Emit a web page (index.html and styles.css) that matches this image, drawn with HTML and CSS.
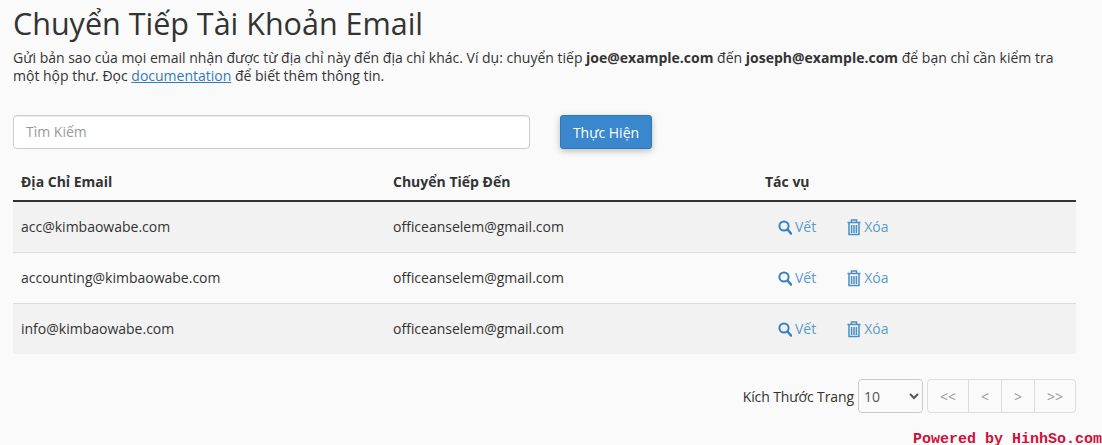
FILE: index.html
```html
<!DOCTYPE html>
<html lang="vi">
<head>
  <meta charset="UTF-8">
  <meta name="viewport" content="width=device-width, initial-scale=1.0">
  <title>Chuyển Tiếp Tài Khoản Email</title>
  <link rel="stylesheet" href="styles.css">
</head>
<body>
  <div class="page">
    <h1>Chuyển Tiếp Tài Khoản Email</h1>
    <p class="intro">Gửi bản sao của mọi email nhận được từ địa chỉ này đến địa chỉ khác. Ví dụ: chuyển tiếp <strong>joe@example.com</strong> đến <strong>joseph@example.com</strong> để bạn chỉ cần kiểm tra một hộp thư. Đọc <a href="#">documentation</a> để biết thêm thông tin.</p>

    <div class="search-row">
      <input class="search-input" type="text" placeholder="Tìm Kiếm">
      <button class="go-button">Thực Hiện</button>
    </div>

    <table class="forwarders">
      <thead>
        <tr>
          <th class="col-email">Địa Chỉ Email</th>
          <th class="col-dest">Chuyển Tiếp Đến</th>
          <th>Tác vụ</th>
        </tr>
      </thead>
      <tbody>
        <tr>
          <td>acc@kimbaowabe.com</td>
          <td>officeanselem@gmail.com</td>
          <td>
            <div class="actions">
              <a href="#"><svg class="icon" viewBox="0 0 14 15"><circle cx="6" cy="6" r="4.6" fill="none" stroke="currentColor" stroke-width="2"/><path d="M9.5 9.5l3.5 4" stroke="currentColor" stroke-width="2.6" stroke-linecap="round"/></svg>Vết</a>
              <a href="#"><svg class="icon trash" viewBox="0 0 14 17"><path d="M.5 3.5h13M2 4v11.5h10V4M4.5 3.5V1h5v2.5M4.6 6v8M7 6v8M9.4 6v8" fill="none" stroke="currentColor" stroke-width="1.5"/></svg>Xóa</a>
            </div>
          </td>
        </tr>
        <tr>
          <td>accounting@kimbaowabe.com</td>
          <td>officeanselem@gmail.com</td>
          <td>
            <div class="actions">
              <a href="#"><svg class="icon" viewBox="0 0 14 15"><circle cx="6" cy="6" r="4.6" fill="none" stroke="currentColor" stroke-width="2"/><path d="M9.5 9.5l3.5 4" stroke="currentColor" stroke-width="2.6" stroke-linecap="round"/></svg>Vết</a>
              <a href="#"><svg class="icon trash" viewBox="0 0 14 17"><path d="M.5 3.5h13M2 4v11.5h10V4M4.5 3.5V1h5v2.5M4.6 6v8M7 6v8M9.4 6v8" fill="none" stroke="currentColor" stroke-width="1.5"/></svg>Xóa</a>
            </div>
          </td>
        </tr>
        <tr>
          <td>info@kimbaowabe.com</td>
          <td>officeanselem@gmail.com</td>
          <td>
            <div class="actions">
              <a href="#"><svg class="icon" viewBox="0 0 14 15"><circle cx="6" cy="6" r="4.6" fill="none" stroke="currentColor" stroke-width="2"/><path d="M9.5 9.5l3.5 4" stroke="currentColor" stroke-width="2.6" stroke-linecap="round"/></svg>Vết</a>
              <a href="#"><svg class="icon trash" viewBox="0 0 14 17"><path d="M.5 3.5h13M2 4v11.5h10V4M4.5 3.5V1h5v2.5M4.6 6v8M7 6v8M9.4 6v8" fill="none" stroke="currentColor" stroke-width="1.5"/></svg>Xóa</a>
            </div>
          </td>
        </tr>
      </tbody>
    </table>

    <div class="pager-row">
      <span class="pager-label">Kích Thước Trang</span>
      <select class="page-size"><option>10</option></select>
      <div class="pager">
        <button>&lt;&lt;</button>
        <button>&lt;</button>
        <button>&gt;</button>
        <button>&gt;&gt;</button>
      </div>
    </div>
  </div>
  <div class="watermark">Powered by HinhSo.com</div>
</body>
</html>
```

FILE: styles.css
```css
body {
  margin: 0;
  height: 445px;
  overflow: hidden;
  background-color: #fafafa;
  font-family: "Open Sans", sans-serif;
  font-size: 14px;
  line-height: 18px;
  color: #333;
}
.page {
  width: 1063px;
  margin-left: 13px;
}
h1 {
  margin: 0;
  padding-top: 3px;
  height: 48px;
  box-sizing: border-box;
  font-size: 30.5px;
  line-height: 40px;
  font-weight: 400;
}
.intro {
  margin: 0;
  padding-top: 1px;
}
.intro a {
  color: #337ab7;
}
.search-row {
  display: flex;
  gap: 30px;
  margin-top: 30px;
}
.search-input {
  width: 517px;
  height: 34px;
  box-sizing: border-box;
  padding: 0 12px 2px;
  border: 1px solid #ccc;
  border-radius: 4px;
  background-color: #fff;
  font-family: inherit;
  font-size: 14px;
  box-shadow: inset 0 1px 1px rgba(0, 0, 0, 0.075);
}
.search-input::placeholder {
  color: #999;
}
.go-button {
  width: 92px;
  height: 34px;
  border: 1px solid #2e77b8;
  border-radius: 3px;
  background-color: #3a87cd;
  color: #fff;
  font-family: inherit;
  font-size: 14px;
  box-shadow: 0 2px 6px rgba(0, 0, 0, 0.25);
}
.forwarders {
  width: 100%;
  margin-top: 15px;
  border-collapse: collapse;
  table-layout: fixed;
}
.forwarders th {
  height: 36px;
  padding: 0 8px;
  text-align: left;
  font-weight: 700;
  border-bottom: 2px solid #333;
}
.col-email, .col-dest {
  width: 356px;
}
.forwarders td {
  height: 50px;
  padding: 0 8px;
  border-top: 1px solid #ddd;
}
.forwarders tbody tr:first-child td {
  border-top: 0;
}
.forwarders tbody tr:nth-child(odd) {
  background-color: #f2f2f2;
}
.actions {
  display: flex;
  align-items: center;
  gap: 31px;
  padding-left: 13px;
}
.actions a {
  display: flex;
  align-items: center;
  gap: 3px;
  color: #5b9bc8;
  text-decoration: none;
}
.icon {
  width: 14px;
  height: 15px;
  color: #3a82c0;
}
.icon.trash {
  height: 17px;
  color: #4a8fc6;
}
.pager-row {
  display: flex;
  justify-content: flex-end;
  align-items: center;
  margin-top: 25px;
}
.pager-label {
  margin-right: 4px;
  padding-top: 2px;
  letter-spacing: -0.1px;
}
.page-size {
  width: 65px;
  height: 34px;
  margin-right: 4px;
  padding-left: 1px;
  border: 1px solid #ccc;
  border-radius: 4px;
  background-color: #fafafa;
  color: #555;
  font-family: inherit;
  font-size: 14px;
}
.pager {
  display: flex;
  height: 34px;
  border: 1px solid #ddd;
  border-radius: 4px;
  box-sizing: border-box;
}
.pager button {
  padding: 0;
  width: 33px;
  border: 0;
  border-left: 1px solid #ddd;
  background: none;
  color: #999;
  font-family: inherit;
  font-size: 14px;
}
.pager button:first-child {
  width: 40px;
  border-left: 0;
}
.pager button:last-child {
  width: 41px;
}
.watermark {
  position: absolute;
  right: 0;
  bottom: 0;
  font-family: "Liberation Mono", monospace;
  font-size: 15px;
  font-weight: 700;
  line-height: 10px;
  color: #d0103a;
}
```
